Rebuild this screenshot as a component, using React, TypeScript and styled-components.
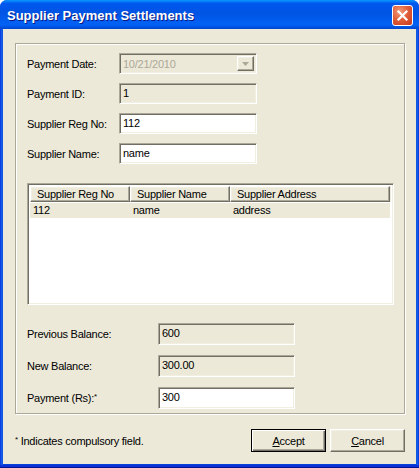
import styled, { createGlobalStyle, css } from "styled-components";

const XP = {
  FACE: "#ECE9D8",
  SHADOW: "#ACA899",
  DK_SHADOW: "#716F64",
  LIGHT: "#F1EFE2",
  HIGHLIGHT: "#FFFFFF",
  GRAY_TEXT: "#ACA899",
};

const GlobalStyle = createGlobalStyle`
  html, body {
    margin: 0;
    padding: 0;
    background: #ffffff;
  }

  body {
    font-family: "Liberation Sans", Arial, sans-serif;
    font-size: 11px;
    letter-spacing: -0.25px;
    color: #000000;
  }
`;

const Sunken = css`
  box-sizing: border-box;
  border: 1px solid;
  border-color: ${XP.SHADOW} ${XP.HIGHLIGHT} ${XP.HIGHLIGHT} ${XP.SHADOW};
  box-shadow: inset 1px 1px 0 ${XP.DK_SHADOW}, inset -1px -1px 0 ${XP.LIGHT};
`;

const Raised = css`
  box-sizing: border-box;
  border: 1px solid;
  border-color: ${XP.HIGHLIGHT} ${XP.DK_SHADOW} ${XP.DK_SHADOW} ${XP.HIGHLIGHT};
  box-shadow: inset -1px -1px 0 ${XP.SHADOW}, inset 1px 1px 0 ${XP.LIGHT};
`;

const Window = styled.div`
  box-sizing: border-box;
  display: flex;
  flex-direction: column;
  width: 419px;
  height: 468px;
  padding: 0 3px 4px 3px;
  background: linear-gradient(90deg, #0831D9 0, #166AEE 2px, #0842D2 3px, #0842D2 calc(100% - 3px), #166AEE calc(100% - 2px), #0831D9 100%);
  border-radius: 7px 7px 0 0;
  overflow: hidden;
  box-shadow: inset 0 -1px 0 #00138C, inset 0 -3px 0 #0831D9;
`;

const TitleBar = styled.div`
  display: flex;
  align-items: center;
  justify-content: space-between;
  height: 29px;
  margin: 0 -3px;
  padding: 0 6px 0 7px;
  background: linear-gradient(180deg, #0997FF 0%, #0058EE 12%, #0054E3 45%, #0262F5 85%, #0047D0 100%);
`;

const Title = styled.span`
  font-family: "Liberation Sans", Arial, sans-serif;
  font-weight: bold;
  font-size: 13px;
  letter-spacing: 0;
  color: #ffffff;
  text-shadow: 1px 1px 0 #0A1883;
  padding-top: 2px;
`;

const CloseButton = styled.button`
  display: flex;
  align-items: center;
  justify-content: center;
  width: 21px;
  height: 21px;
  padding: 0;
  margin-top: 1px;
  border: 1px solid #ffffff;
  border-radius: 3px;
  background: radial-gradient(circle at 35% 30%, #F29E7C 0%, #E1603B 45%, #C5371B 100%);
`;

const Client = styled.div`
  flex: 1;
  display: flex;
  flex-direction: column;
  padding: 14px 11px 0 12px;
  background: ${XP.FACE};
`;

const GroupBox = styled.div`
  box-sizing: border-box;
  padding: 9px 11px 4px 11px;
  border: 1px solid ${XP.SHADOW};
  box-shadow: inset 1px 1px 0 ${XP.HIGHLIGHT}, 1px 1px 0 ${XP.HIGHLIGHT};
`;

const FormGrid = styled.div<{ $labelWidth: number; $fieldWidth: number; $rowHeight: number; $gap: number }>`
  display: grid;
  grid-template-columns: ${(p) => p.$labelWidth}px ${(p) => p.$fieldWidth}px;
  grid-auto-rows: ${(p) => p.$rowHeight}px;
  row-gap: ${(p) => p.$gap}px;
  align-items: center;
`;

const Label = styled.span`
  white-space: nowrap;
`;

const Star = styled.span`
  position: relative;
  top: -3px;
  font-size: 8px;
`;

const TextBox = styled.div<{ $disabled?: boolean }>`
  ${Sunken}
  height: 100%;
  padding: 2px 3px 0 3px;
  line-height: 14px;
  background: ${(p) => (p.$disabled ? XP.FACE : "#ffffff")};
`;

const ComboBox = styled.div`
  ${Sunken}
  display: flex;
  align-items: stretch;
  height: 100%;
  padding: 2px;
  background: ${XP.FACE};
  color: ${XP.GRAY_TEXT};
`;

const ComboText = styled.span`
  flex: 1;
  padding: 1px 1px 0 1px;
  line-height: 14px;
`;

const ComboArrow = styled.span`
  ${Raised}
  display: flex;
  align-items: center;
  justify-content: center;
  width: 17px;
  background: ${XP.FACE};
`;

const ListView = styled.div`
  ${Sunken}
  width: 367px;
  height: 122px;
  margin-top: 19px;
  padding: 2px;
  background: #ffffff;
`;

const ListRow = styled.div<{ $header?: boolean }>`
  display: grid;
  grid-template-columns: 100px 100px 160px 1fr;
  height: ${(p) => (p.$header ? 16 : 15)}px;
  margin-bottom: ${(p) => (p.$header ? 1 : 0)}px;
  background: ${(p) => (p.$header ? XP.FACE : "transparent")};
`;

const HeaderCell = styled.span`
  ${Raised}
  padding: 1px 0 0 6px;
  line-height: 13px;
  white-space: nowrap;
  overflow: hidden;
`;

const HeaderFiller = styled.span`
  background: ${XP.FACE};
`;

const Cell = styled.span<{ $selected?: boolean }>`
  padding: 1px 0 0 3px;
  line-height: 13px;
  white-space: nowrap;
  background: ${(p) => (p.$selected ? XP.FACE : "transparent")};
`;

const BottomForm = styled(FormGrid)`
  margin-top: 18px;
`;

const Footer = styled.div`
  display: flex;
  align-items: center;
  justify-content: space-between;
  margin-top: 15px;
`;

const Note = styled.span`
  padding-top: 1px;
`;

const ButtonRow = styled.div`
  display: flex;
  gap: 4px;
`;

const PushButton = styled.button<{ $default?: boolean }>`
  box-sizing: border-box;
  width: 75px;
  height: 23px;
  padding: 0;
  font-family: "Liberation Sans", Arial, sans-serif;
  font-size: 11px;
  letter-spacing: -0.25px;
  color: #000000;
  background: ${XP.FACE};
  ${(p) =>
    p.$default
      ? css`
          border: 1px solid #000000;
          box-shadow: inset 1px 1px 0 ${XP.HIGHLIGHT}, inset -1px -1px 0 ${XP.DK_SHADOW}, inset -2px -2px 0 ${XP.SHADOW};
        `
      : Raised}

  u {
    text-decoration: underline;
  }
`;

const CloseIcon = () => (
  <svg width="13" height="13" viewBox="0 0 13 13">
    <path d="M2.5 2.5 L10.5 10.5 M10.5 2.5 L2.5 10.5" stroke="#ffffff" strokeWidth="2.2" strokeLinecap="square" />
  </svg>
);

const DownArrow = () => (
  <svg width="7" height="4" viewBox="0 0 7 4">
    <path d="M0 0 H7 L3.5 4 Z" fill={XP.GRAY_TEXT} />
  </svg>
);

const SUPPLIERS = [{ regNo: "112", name: "name", address: "address" }];

const App = () => {
  return (
    <>
      <GlobalStyle />
      <Window>
        <TitleBar>
          <Title>Supplier Payment Settlements</Title>
          <CloseButton type="button" aria-label="Close">
            <CloseIcon />
          </CloseButton>
        </TitleBar>
        <Client>
          <GroupBox>
            <FormGrid $labelWidth={92} $fieldWidth={138} $rowHeight={21} $gap={9}>
              <Label>Payment Date:</Label>
              <ComboBox>
                <ComboText>10/21/2010</ComboText>
                <ComboArrow>
                  <DownArrow />
                </ComboArrow>
              </ComboBox>
              <Label>Payment ID:</Label>
              <TextBox $disabled>1</TextBox>
              <Label>Supplier Reg No:</Label>
              <TextBox>112</TextBox>
              <Label>Supplier Name:</Label>
              <TextBox>name</TextBox>
            </FormGrid>

            <ListView>
              <ListRow $header>
                <HeaderCell>Supplier Reg No</HeaderCell>
                <HeaderCell>Supplier Name</HeaderCell>
                <HeaderCell>Supplier Address</HeaderCell>
                <HeaderFiller />
              </ListRow>
              {SUPPLIERS.map((s) => (
                <ListRow key={s.regNo}>
                  <Cell $selected>{s.regNo}</Cell>
                  <Cell $selected>{s.name}</Cell>
                  <Cell $selected>{s.address}</Cell>
                  <Cell />
                </ListRow>
              ))}
            </ListView>

            <BottomForm $labelWidth={131} $fieldWidth={137} $rowHeight={22} $gap={10}>
              <Label>Previous Balance:</Label>
              <TextBox $disabled>600</TextBox>
              <Label>New Balance:</Label>
              <TextBox $disabled>300.00</TextBox>
              <Label>
                Payment (Rs):<Star>*</Star>
              </Label>
              <TextBox>300</TextBox>
            </BottomForm>
          </GroupBox>

          <Footer>
            <Note>
              <Star>*</Star> Indicates compulsory field.
            </Note>
            <ButtonRow>
              <PushButton type="button" $default>
                <u>A</u>ccept
              </PushButton>
              <PushButton type="button">
                <u>C</u>ancel
              </PushButton>
            </ButtonRow>
          </Footer>
        </Client>
      </Window>
    </>
  );
};

export default App;
